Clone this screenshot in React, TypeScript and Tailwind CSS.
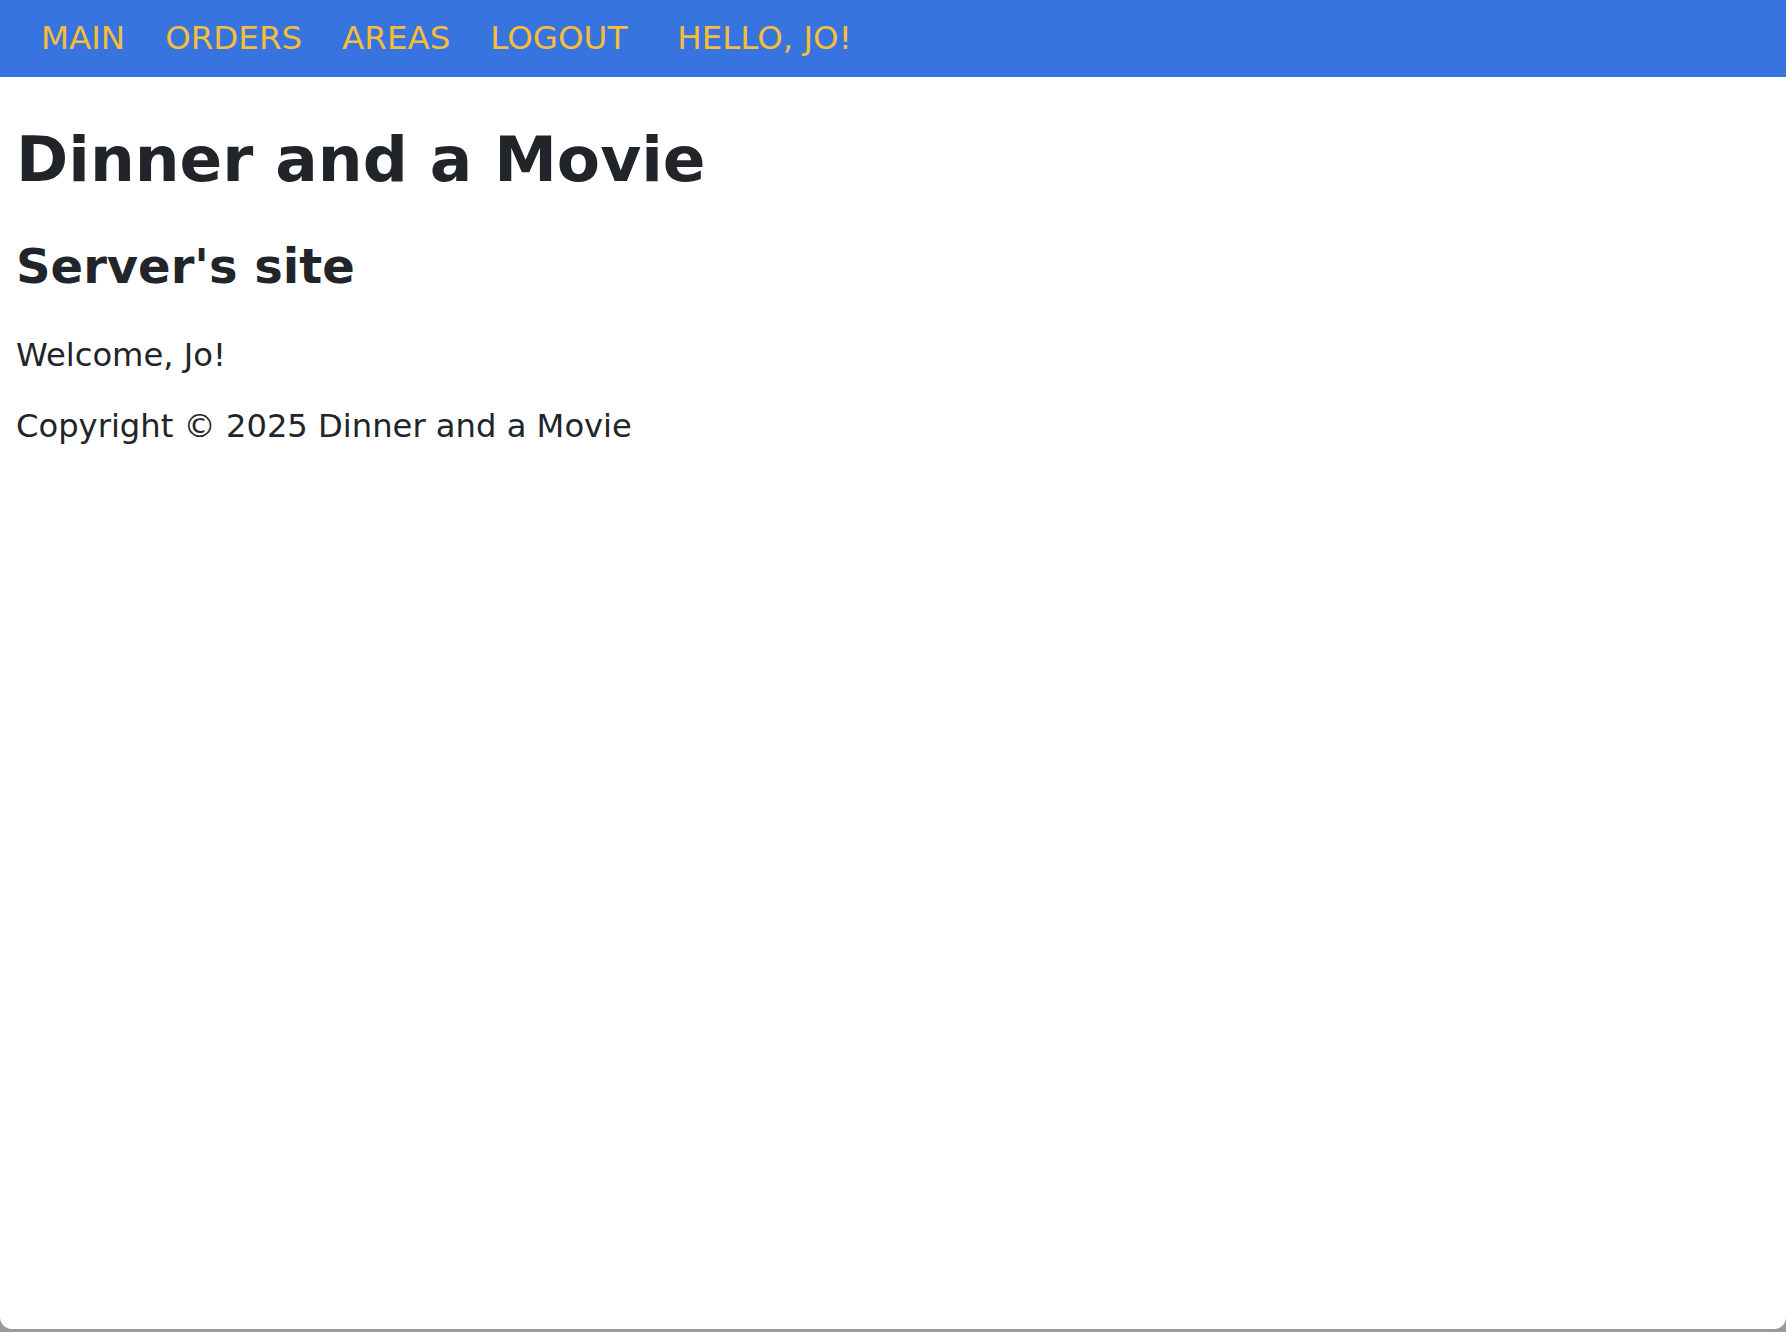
import React from 'react';

const navItems = ['MAIN', 'ORDERS', 'AREAS', 'LOGOUT'];

export default function App() {
  return (
    <div className="h-[1332px] bg-[#9a9a9a] overflow-hidden">
      <div className="h-[1329px] bg-white rounded-b-[12px] overflow-hidden text-[#212529] font-['DejaVu_Sans',sans-serif]">
        <nav className="h-[77px] bg-[#3874e0] flex items-center pl-[41px] text-[32.5px] text-[#f5bd3a]">
          {navItems.map((item) => (
            <a key={item} href="#" className="mr-[40px]">
              {item}
            </a>
          ))}
          <span className="ml-[10px]">HELLO, JO!</span>
        </nav>

        <main className="px-[16px]">
          <h1 className="font-bold text-[63px] leading-[1.2] mt-[45px]">
            Dinner and a Movie
          </h1>
          <h2 className="font-bold text-[48px] leading-[1.2] mt-[40px]">
            Server's site
          </h2>
          <p className="text-[32.2px] leading-[1.5] mt-[36px]">Welcome, Jo!</p>
          <footer className="text-[32.2px] leading-[1.5] mt-[23px]">
            Copyright © 2025 Dinner and a Movie
          </footer>
        </main>
      </div>
    </div>
  );
}
